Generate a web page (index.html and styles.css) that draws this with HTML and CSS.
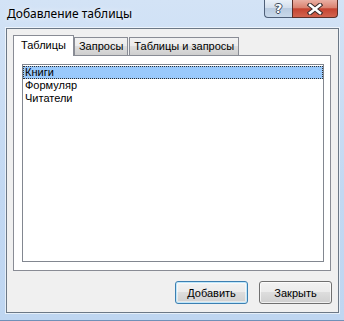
FILE: index.html
```html
<!DOCTYPE html>
<html lang="ru">
<head>
    <meta charset="UTF-8">
    <title>Добавление таблицы</title>
    <link rel="stylesheet" href="styles.css">
</head>
<body>

    <div class="window">
        <div class="titlebar">
            <span class="title">Добавление таблицы</span>
            <div class="caption-buttons">
                <span class="btn-help">?</span>
                <span class="btn-close">
                    <svg width="16" height="12" viewBox="0 0 16 12">
                        <path d="M3 2 L13 10 M13 2 L3 10" stroke="#3a2b2b" stroke-width="4.6" stroke-linecap="square" fill="none"/>
                        <path d="M3 2 L13 10 M13 2 L3 10" stroke="#ffffff" stroke-width="2.6" stroke-linecap="square" fill="none"/>
                    </svg>
                </span>
            </div>
        </div>

        <div class="client">
            <!-- Вкладки -->
            <div class="tabs">
                <div class="tab active">Таблицы</div>
                <div class="tab">Запросы</div>
                <div class="tab">Таблицы и запросы</div>
            </div>

            <div class="tab-panel">
                <ul class="listbox">
                    <li class="selected">Книги</li>
                    <li>Формуляр</li>
                    <li>Читатели</li>
                </ul>
            </div>

            <div class="actions">
                <button class="button default">Добавить</button>
                <button class="button">Закрыть</button>
            </div>
        </div>
    </div>

</body>
</html>
```

FILE: styles.css
```css
body {
    margin: 0;
    font-family: "Liberation Sans", Arial, sans-serif;
    font-size: 11px;
    color: black;
    background-color: #c6dbf3;
}

.window {
    width: 344px;
    height: 321px;
    box-sizing: border-box;
    padding: 0 5px 7px 6px;
    display: flex;
    flex-direction: column;
    background: linear-gradient(to bottom, #d3e3f6, #c2d8f2 60%, #bfd6f1);
    border-bottom: 1px solid #7090b8;
}

.titlebar {
    height: 28px;
    display: flex;
    justify-content: space-between;
    align-items: flex-start;
    flex-shrink: 0;
}

.title {
    font-family: "Noto Sans", sans-serif;
    font-size: 12px;
    margin: 5px 0 0 1px;
    text-shadow: 0 0 6px rgba(255, 255, 255, 0.9);
}

.caption-buttons {
    display: flex;
    margin-right: 1px;
}

.btn-help, .btn-close {
    height: 18px;
    box-sizing: border-box;
    display: flex;
    justify-content: center;
    align-items: center;
}

.btn-help {
    width: 28px;
    border: 1px solid #4e5f78;
    border-top: none;
    border-right: none;
    border-bottom-left-radius: 4px;
    background: linear-gradient(to bottom, #e9f0f8, #d3deec 45%, #b9cbe0 50%, #c8d8ea);
    color: white;
    font-family: "DejaVu Sans", sans-serif;
    font-weight: bold;
    font-size: 13px;
    text-shadow: -1px 0 #3d4a5c, 1px 0 #3d4a5c, 0 -1px #3d4a5c, 0 1px #3d4a5c;
}

.btn-close {
    width: 46px;
    border: 1px solid #5c2f28;
    border-top: none;
    border-bottom-right-radius: 4px;
    background: linear-gradient(to bottom, #eab0a4, #da8270 45%, #c54330 52%, #d2644f);
}

.client {
    flex: 1;
    display: flex;
    flex-direction: column;
    background-color: #f0f0f0;
    border: 1px solid #6c7886;
    box-shadow: 0 0 0 1px rgba(255, 255, 255, 0.6);
    padding: 6px 6px 8px 6px;
}

.tabs {
    display: flex;
    align-items: flex-end;
    height: 20px;
    position: relative;
    z-index: 1;
}

.tab {
    height: 18px;
    box-sizing: border-box;
    padding: 2px 4px 0 4px;
    border: 1px solid #898c95;
    border-bottom: none;
    margin-left: -1px;
    background: linear-gradient(to bottom, #f2f2f2, #ebebeb 50%, #dddddd 50%, #cfcfcf);
    white-space: nowrap;
}

.tab + .tab + .tab {
    margin-left: 1px;
}

.tab.active {
    height: 21px;
    margin-left: 0;
    margin-bottom: -1px;
    padding: 3px 7px 0 7px;
    background: white;
    margin-right: 1px;
}

.tab-panel {
    flex: 1;
    display: flex;
    background: white;
    border: 1px solid #898c95;
    padding: 8px 6px 8px 8px;
    margin-right: 1px;
}

.listbox {
    flex: 1;
    list-style: none;
    margin: 0;
    padding: 1px 0 0 0;
    border: 1px solid #828790;
    background: white;
}

.listbox li {
    height: 13px;
    line-height: 13px;
    padding-left: 2px;
    box-sizing: border-box;
}

.listbox li.selected {
    background-color: #99c9fc;
    outline: 1px dotted #303030;
    outline-offset: -1px;
}

.actions {
    display: flex;
    justify-content: flex-end;
    gap: 11px;
    margin-top: 10px;
}

.button {
    width: 73px;
    height: 23px;
    font-family: "Liberation Sans", Arial, sans-serif;
    font-size: 11px;
    color: black;
    border: 1px solid #707070;
    border-radius: 3px;
    background: linear-gradient(to bottom, #f2f2f2, #ebebeb 50%, #dddddd 50%, #cfcfcf);
    box-shadow: inset 0 0 0 1px rgba(255, 255, 255, 0.7);
    padding: 0;
}

.button.default {
    border-color: #3c7fb1;
    box-shadow: inset 0 0 0 1px #bfe7fb, inset 0 0 0 2px rgba(255, 255, 255, 0.5);
}
```
